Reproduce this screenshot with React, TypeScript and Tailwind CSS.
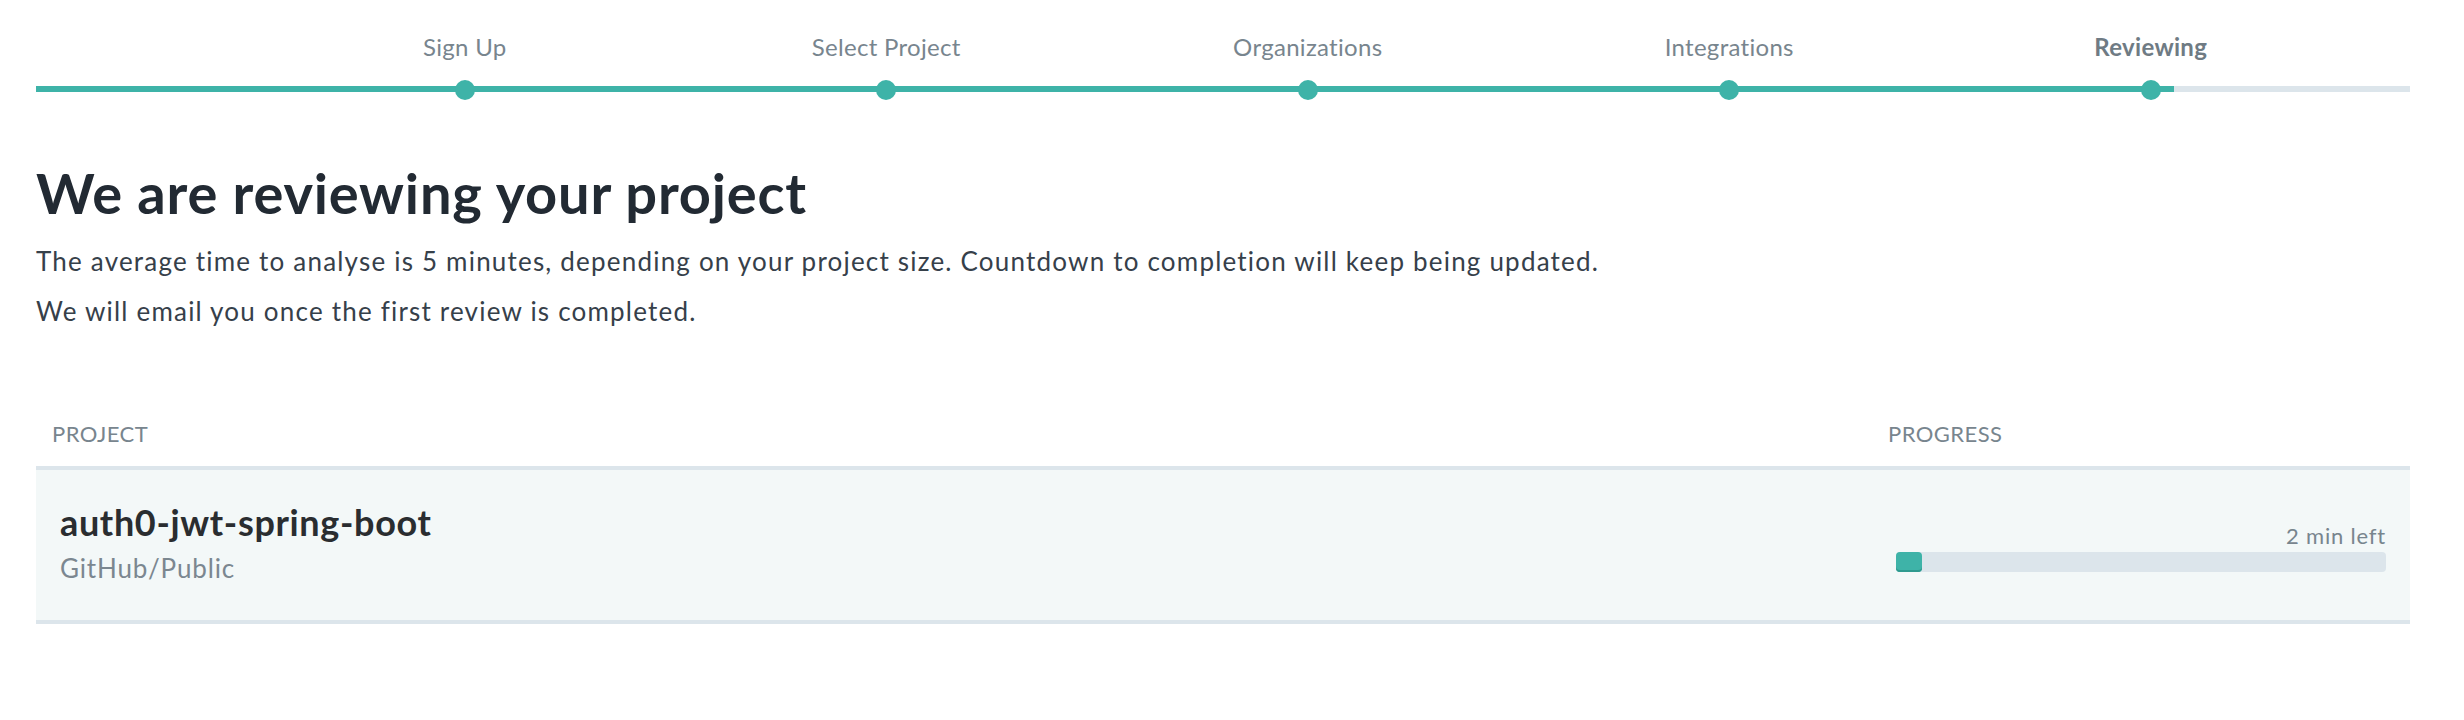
import React from "react";

const steps = ["Sign Up", "Select Project", "Organizations", "Integrations", "Reviewing"];

function Stepper() {
  return (
    <div className="pt-[31px]">
      <div className="flex pl-[218px]">
        {steps.map((s, i) => (
          <div
            key={s}
            className={
              i === steps.length - 1
                ? "w-[421.5px] text-center text-[24px] leading-[32px] tracking-[0.3px] font-bold text-[#6f7b84]"
                : "w-[421.5px] text-center text-[24px] leading-[32px] tracking-[0.3px] text-[#78858e]"
            }
          >
            {s}
          </div>
        ))}
      </div>
      <div className="relative mt-[17px] h-[20px]">
        <div className="absolute left-0 right-0 top-[6px] h-[6px] bg-[#dce5eb]" />
        <div className="absolute left-0 top-[6px] h-[6px] w-[2138px] bg-[#3eb3a8]" />
        <div className="relative flex pl-[218px]">
          {steps.map((s) => (
            <div key={s} className="flex w-[421.5px] justify-center">
              <span className="block h-[20px] w-[20px] rounded-full bg-[#3eb3a8]" />
            </div>
          ))}
        </div>
      </div>
    </div>
  );
}

function ProjectTable() {
  return (
    <div className="mt-[87px]">
      <div className="flex border-b-[4px] border-[#dce5eb] pb-[16px] text-[22px] leading-[32px] tracking-[0.45px] uppercase text-[#78858e]">
        <div className="flex-1 pl-[16px]">Project</div>
        <div className="w-[538px] pl-[16px]">Progress</div>
      </div>
      <div className="flex h-[154px] border-b-[4px] border-[#dce5eb] bg-[#f3f8f8]">
        <div className="flex-1 pl-[24px] pt-[30px]">
          <div className="text-[36px] leading-[44px] tracking-[0.65px] font-bold text-[#2a2d30]">auth0-jwt-spring-boot</div>
          <div className="mt-[6px] text-[26px] leading-[36px] tracking-[0.85px] text-[#7b8790]">GitHub/Public</div>
        </div>
        <div className="w-[538px] px-[24px] pt-[52px]">
          <div className="text-right text-[22px] leading-[28px] tracking-[0.8px] text-[#78858e]">2 min left</div>
          <div className="mt-[2px] h-[20px] rounded-[4px] bg-[#dce5eb]">
            <div className="h-[20px] w-[26px] rounded-[4px] bg-[#3eb3a8] shadow-[inset_0_-2px_0_#2f9a8f]" />
          </div>
        </div>
      </div>
    </div>
  );
}

export default function App() {
  return (
    <div className="min-h-[720px] bg-white font-[Lato,'Open_Sans',sans-serif]">
      <div className="ml-[36px] w-[2374px]">
        <Stepper />
        <h1 className="mt-[59px] text-[56px] leading-[68px] tracking-[0.8px] font-bold text-[#222a33]">
          We are reviewing your project
        </h1>
        <p className="mt-[14px] text-[26px] leading-[40px] tracking-[1.2px] text-[#36404a]">
          The average time to analyse is 5 minutes, depending on your project size. Countdown to completion will keep being updated.
        </p>
        <p className="mt-[10px] text-[26px] leading-[40px] tracking-[1.2px] text-[#36404a]">
          We will email you once the first review is completed.
        </p>
        <ProjectTable />
      </div>
    </div>
  );
}
